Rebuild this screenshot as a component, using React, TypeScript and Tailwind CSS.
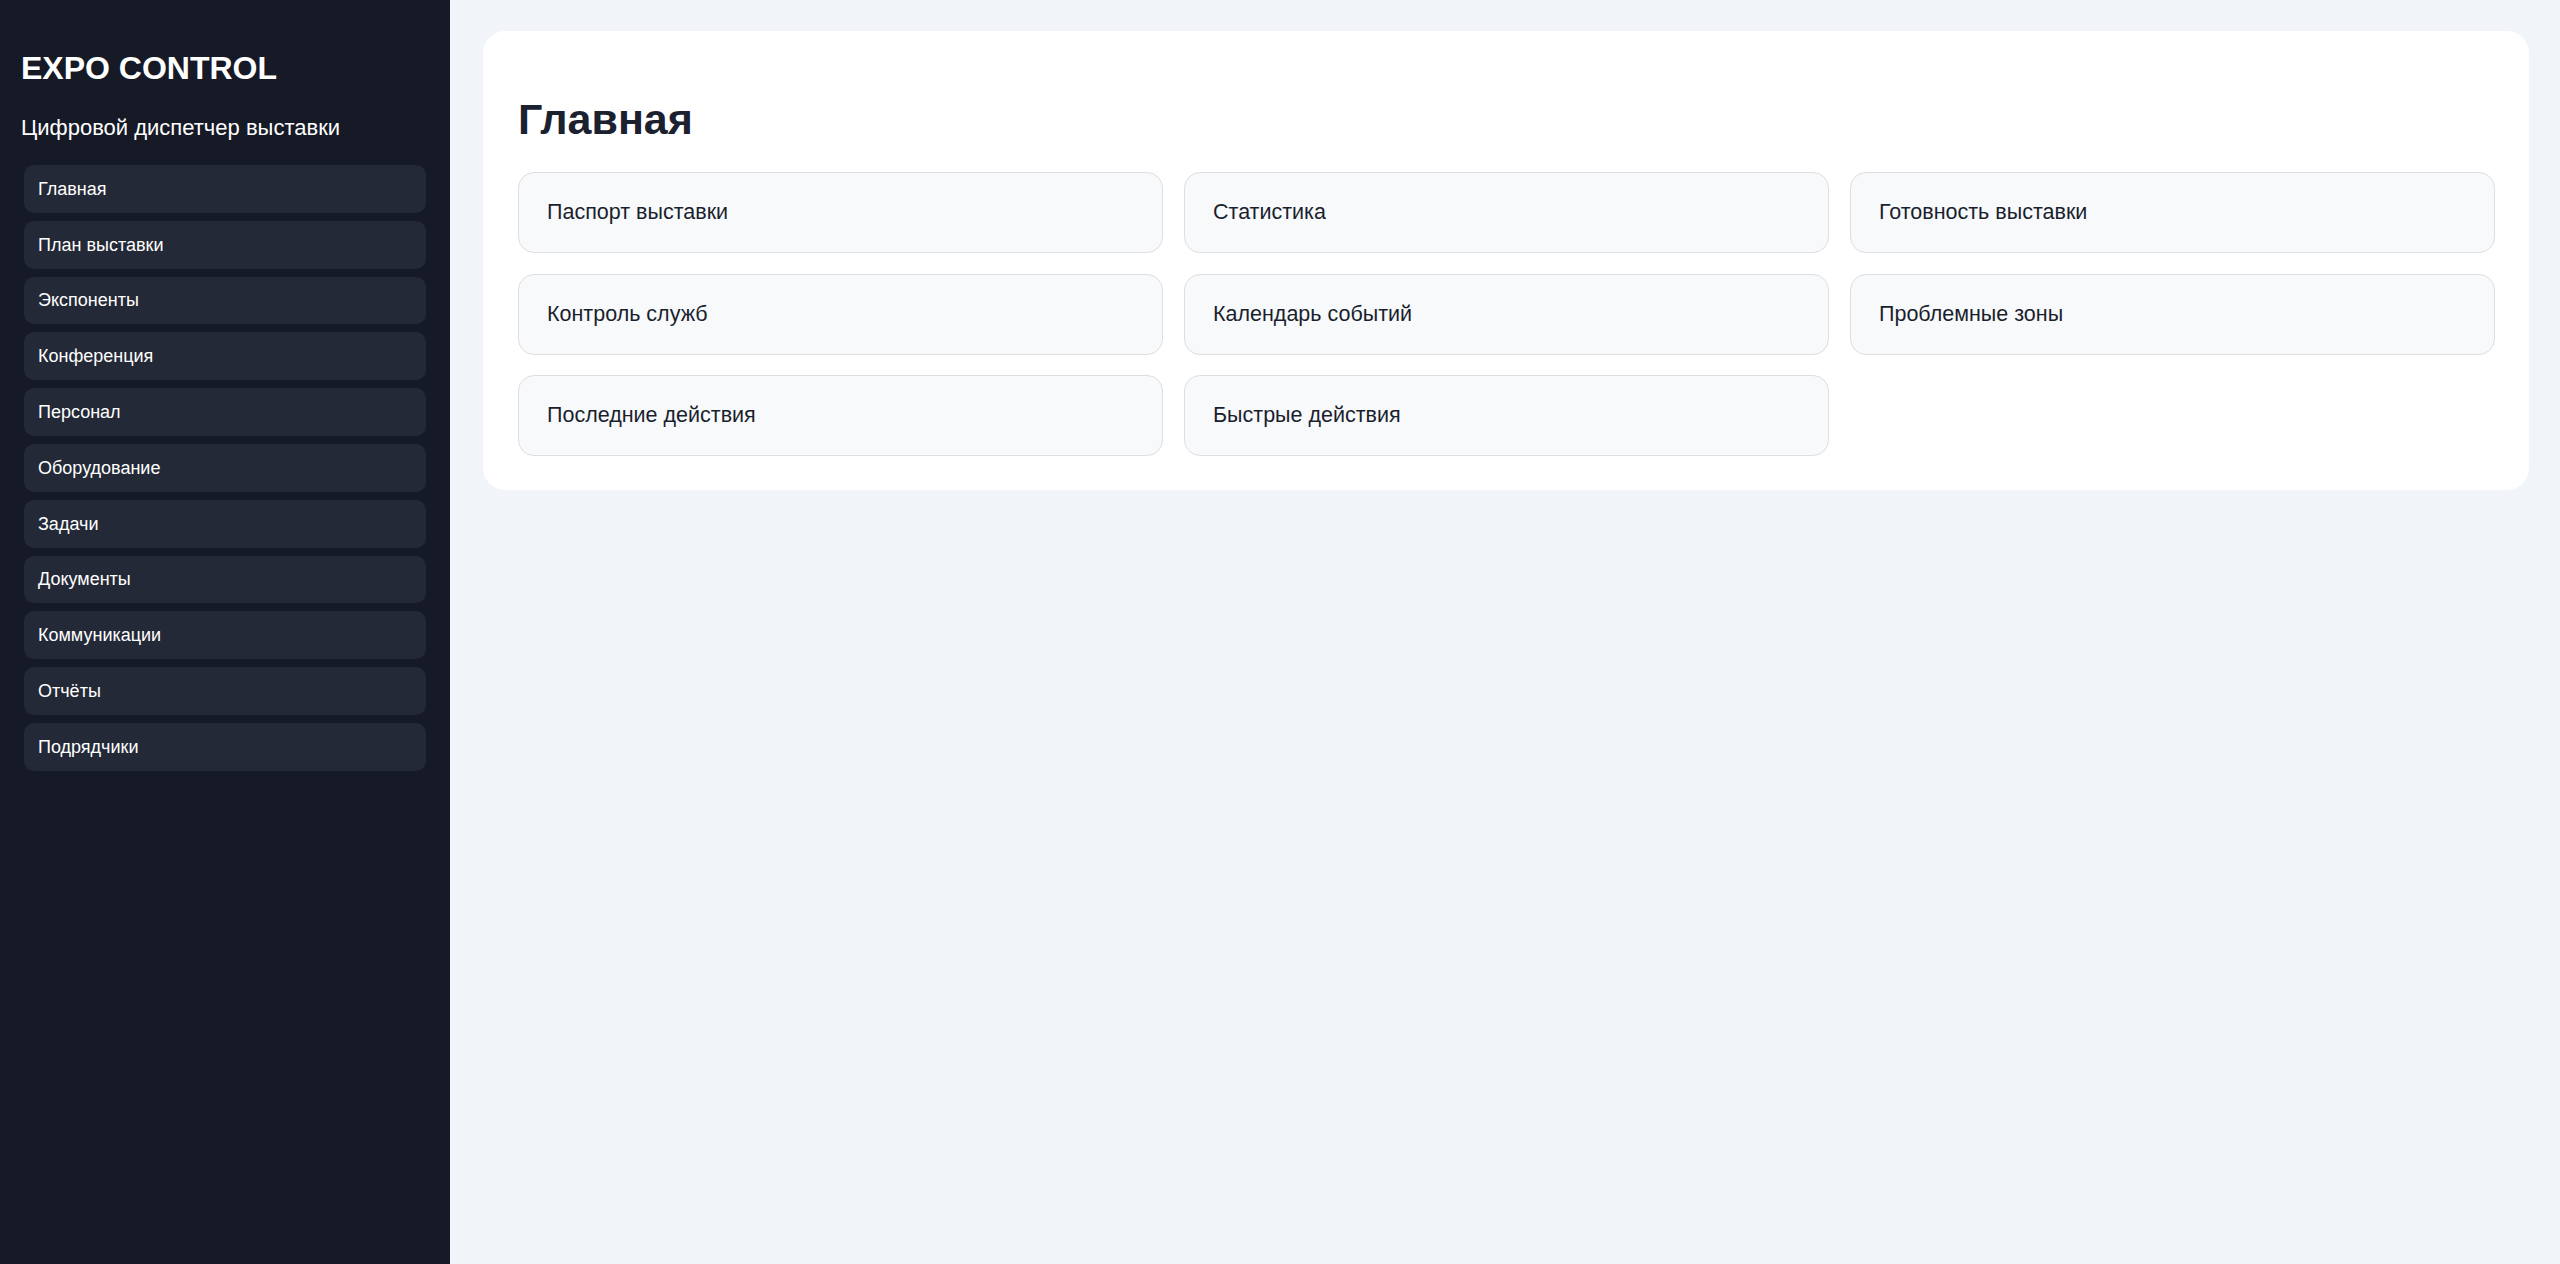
const navItems = [
  "Главная",
  "План выставки",
  "Экспоненты",
  "Конференция",
  "Персонал",
  "Оборудование",
  "Задачи",
  "Документы",
  "Коммуникации",
  "Отчёты",
  "Подрядчики",
];

const tiles = [
  "Паспорт выставки",
  "Статистика",
  "Готовность выставки",
  "Контроль служб",
  "Календарь событий",
  "Проблемные зоны",
  "Последние действия",
  "Быстрые действия",
];

export default function App() {
  return (
    <div className="flex min-h-[1264px] w-full font-['Liberation_Sans',Arial,sans-serif]">
      <aside className="w-[450px] shrink-0 bg-[#161a27] px-[21px] pt-[48px] text-white">
        <h1 className="text-[32px] font-bold leading-[40px]">EXPO CONTROL</h1>
        <p className="mt-[25px] text-[22px] leading-[30px]">Цифровой диспетчер выставки</p>

        <nav className="mt-[22px] flex flex-col gap-[8px] px-[3px]">
          {navItems.map((item) => (
            <a
              key={item}
              href="#"
              className="flex h-[47.8px] items-center rounded-[10px] bg-[#242937] px-[14px] pt-[1px] text-[18px] text-white"
            >
              {item}
            </a>
          ))}
        </nav>
      </aside>

      <main className="flex-1 bg-[#f1f4f9] pl-[33px] pr-[31px] pt-[31px]">
        <section className="rounded-[22px] bg-white pb-[34px] pl-[35px] pr-[34px] pt-[62px]">
          <h2 className="text-[43px] font-bold leading-[52px] text-[#1c2130]">Главная</h2>

          <div className="mt-[27px] grid grid-cols-3 gap-x-[21px] gap-y-[20.5px]">
            {tiles.map((tile) => (
              <div
                key={tile}
                className="flex h-[81px] items-center rounded-[16px] border border-[#dcdee2] bg-[#f8f9fb] px-[28px] text-[21.5px] text-[#1a1f2e]"
              >
                {tile}
              </div>
            ))}
          </div>
        </section>
      </main>
    </div>
  );
}
